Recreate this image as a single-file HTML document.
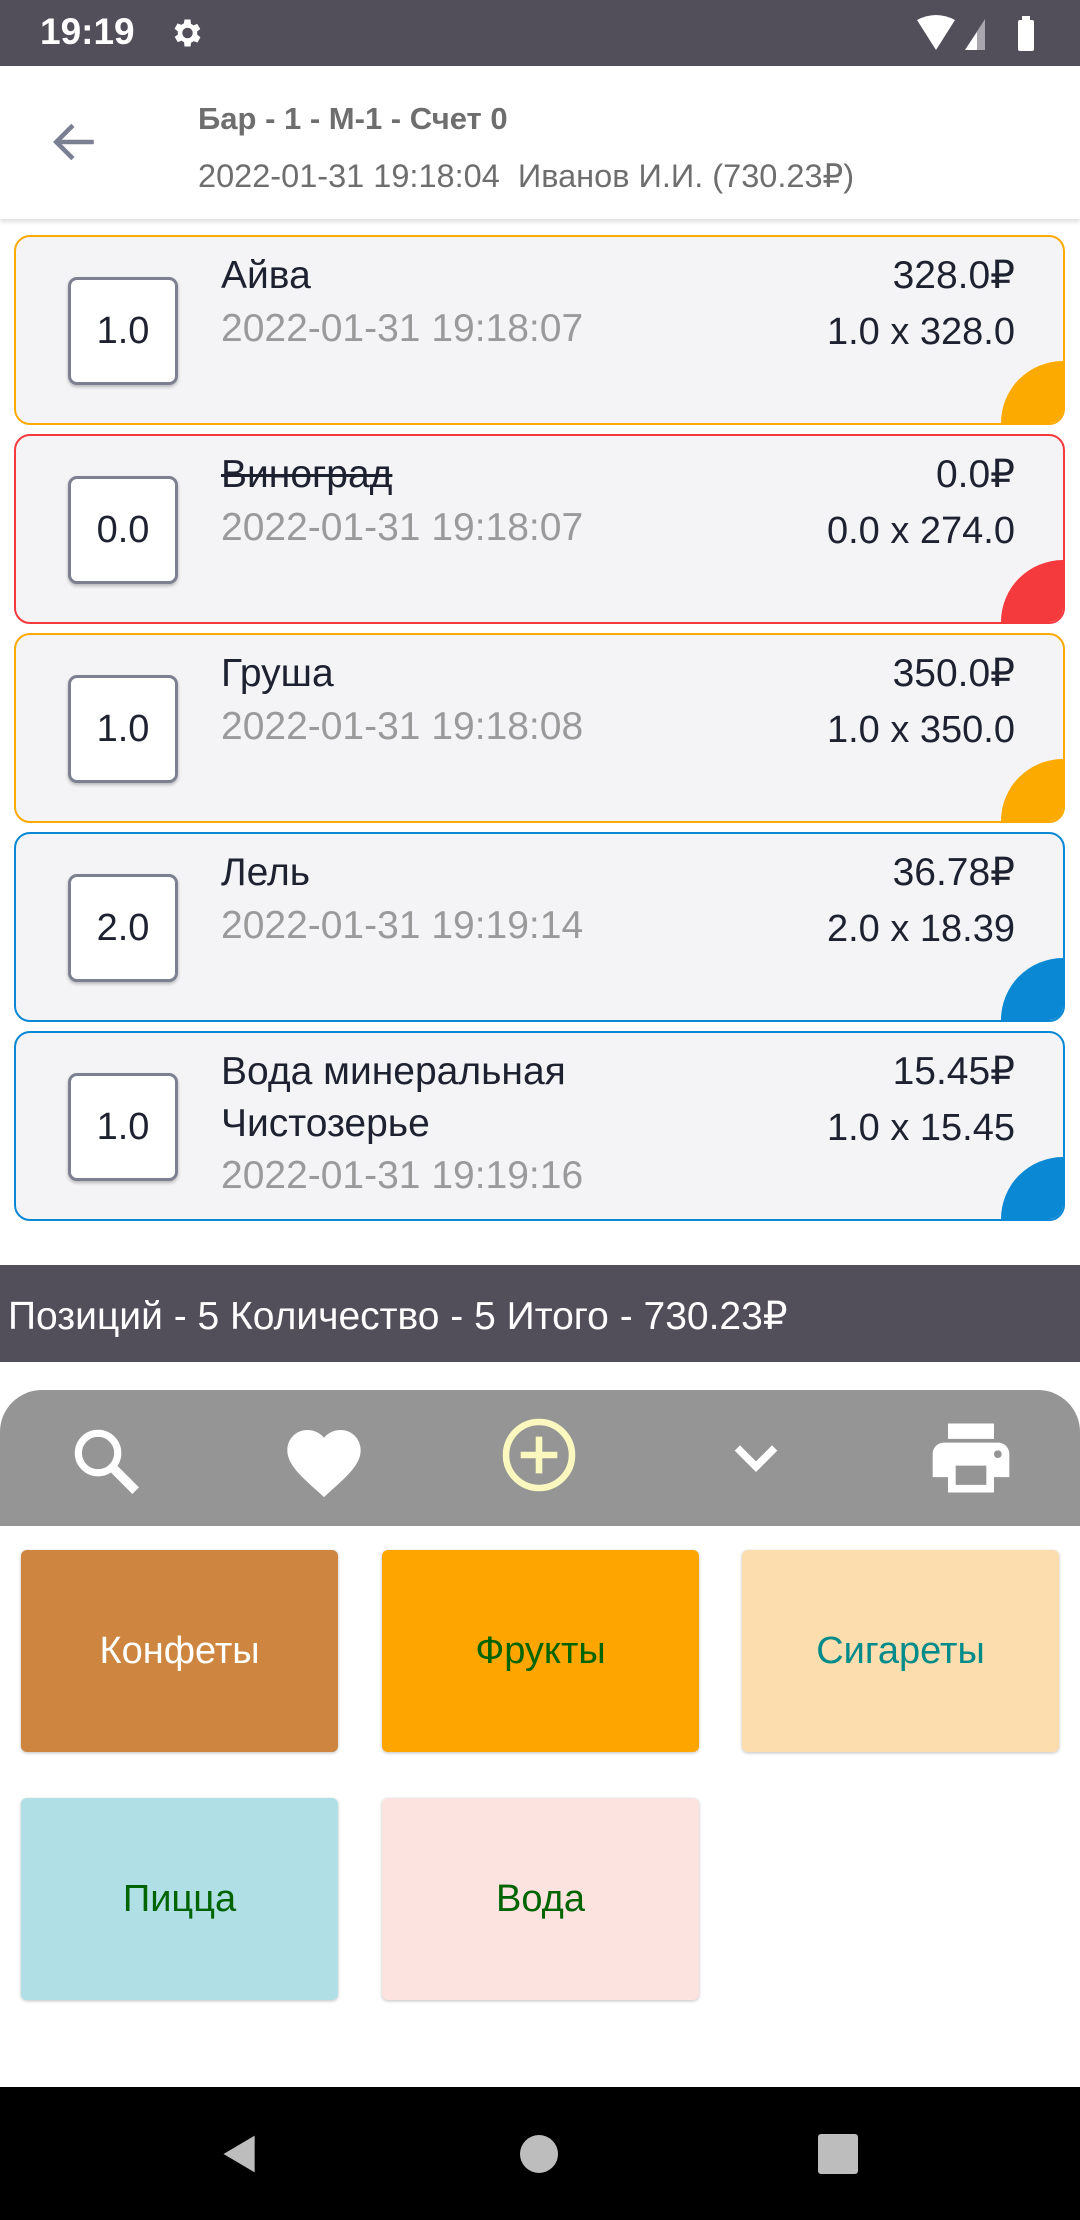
<!DOCTYPE html>
<html><head><meta charset="utf-8"><style>
*{margin:0;padding:0;box-sizing:border-box}
body{width:1080px;height:2220px;position:relative;background:#fff;font-family:"Liberation Sans",sans-serif;overflow:hidden}
.abs{position:absolute}
.card{position:absolute;left:14px;width:1051px;border:2px solid;border-radius:16px;background:#f4f4f6;overflow:hidden}
.qty{position:absolute;left:52px;top:40px;width:110px;height:108px;background:#fff;border:3px solid #7c8090;border-radius:9px;font-size:38px;color:#1e2230;display:flex;align-items:center;justify-content:center;box-shadow:0 2px 3px rgba(0,0,0,.25)}
.name{position:absolute;left:205px;top:13px;font-size:39px;color:#1e2230;line-height:52px}
.date{position:absolute;left:205px;font-size:39px;color:#9a9a9a}
.price{position:absolute;right:48px;top:13px;font-size:39px;color:#1e2230;line-height:52px;text-align:right}
.mul{position:absolute;right:48px;top:74px;font-size:38px;color:#1e2230}
.corner{position:absolute;right:0;bottom:0;width:62px;height:62px;border-top-left-radius:62px}
.tile{position:absolute;width:317px;height:202px;border-radius:6px;display:flex;align-items:center;justify-content:center;font-size:38px;box-shadow:0 1px 3px rgba(0,0,0,.25)}
</style></head><body>
<div class="abs" style="left:0;top:0;width:1080px;height:66px;background:#524f5a"></div>
<div class="abs" style="left:40px;top:11px;font-size:37px;font-weight:bold;color:#fff">19:19</div>
<svg class="abs" style="left:168px;top:15px" width="36" height="36" viewBox="0 0 24 24"><path fill="#fff" d="M19.4 13a7.5 7.5 0 000-2l2.1-1.6-2-3.5-2.5 1a7 7 0 00-1.7-1L15 3h-4l-.4 2.6a7 7 0 00-1.7 1l-2.5-1-2 3.5L6.6 11a7.5 7.5 0 000 2l-2.1 1.6 2 3.5 2.5-1a7 7 0 001.7 1L11 21h4l.4-2.6a7 7 0 001.7-1l2.5 1 2-3.5zM13 15.5a3.5 3.5 0 110-7 3.5 3.5 0 010 7z"/></svg>
<svg class="abs" style="left:915px;top:14px" width="130" height="40" viewBox="0 0 130 40"><path fill="#fff" d="M2 6Q21-4 40 6L21 36z"/><path fill="#fff" d="M50 36L70 5v31z" opacity=".5"/><path fill="#fff" d="M50 36L62 18v18z"/><rect x="103" y="6" width="16" height="31" rx="2" fill="#fff"/><rect x="107" y="2" width="8" height="5" fill="#fff"/></svg>
<div class="abs" style="left:0;top:66px;width:1080px;height:153px;background:#fff;box-shadow:0 3px 4px rgba(0,0,0,.12)"></div>
<svg class="abs" style="left:50px;top:117px" width="50" height="50" viewBox="0 0 24 24"><path fill="none" stroke="#7a7f92" stroke-width="2.2" d="M21 12H4M11 4l-8 8 8 8"/></svg>
<div class="abs" style="left:198px;top:101px;font-size:31px;font-weight:bold;color:#6e6e6e">Бар - 1 - М-1 - Счет 0</div>
<div class="abs" style="left:198px;top:157px;font-size:32.5px;color:#6e6e6e">2022-01-31 19:18:04&nbsp; Иванов И.И. (730.23₽)</div>

<div class="card" style="top:235px;height:190px;border-color:#fcaa00"><div class="qty">1.0</div><div class="name">Айва</div><div class="date" style="top:70px">2022-01-31 19:18:07</div><div class="price">328.0₽</div><div class="mul">1.0 x 328.0</div><div class="corner" style="background:#fcaa00"></div></div>
<div class="card" style="top:434px;height:190px;border-color:#f53a3e"><div class="qty">0.0</div><div class="name" style="text-decoration:line-through">Виноград</div><div class="date" style="top:70px">2022-01-31 19:18:07</div><div class="price">0.0₽</div><div class="mul">0.0 x 274.0</div><div class="corner" style="background:#f53a3e"></div></div>
<div class="card" style="top:633px;height:190px;border-color:#fcaa00"><div class="qty">1.0</div><div class="name">Груша</div><div class="date" style="top:70px">2022-01-31 19:18:08</div><div class="price">350.0₽</div><div class="mul">1.0 x 350.0</div><div class="corner" style="background:#fcaa00"></div></div>
<div class="card" style="top:832px;height:190px;border-color:#0a88d4"><div class="qty">2.0</div><div class="name">Лель</div><div class="date" style="top:70px">2022-01-31 19:19:14</div><div class="price">36.78₽</div><div class="mul">2.0 x 18.39</div><div class="corner" style="background:#0a88d4"></div></div>
<div class="card" style="top:1031px;height:190px;border-color:#0a88d4"><div class="qty">1.0</div><div class="name">Вода минеральная<br>Чистозерье</div><div class="date" style="top:121px">2022-01-31 19:19:16</div><div class="price">15.45₽</div><div class="mul">1.0 x 15.45</div><div class="corner" style="background:#0a88d4"></div></div>

<div class="abs" style="left:0;top:1265px;width:1080px;height:97px;background:#524f5a"></div>
<div class="abs" style="left:8px;top:1294px;font-size:39px;color:#fff">Позиций - 5 Количество - 5 Итого - 730.23₽</div>

<div class="abs" style="left:0;top:1390px;width:1080px;height:136px;background:#959595;border-radius:42px 42px 0 0"></div>
<svg class="abs" style="left:64px;top:1419px" width="86" height="86" viewBox="0 0 24 24"><circle cx="9.5" cy="9.5" r="5.5" fill="none" stroke="#fff" stroke-width="2"/><path d="M13.5 13.5l6.5 6.5" stroke="#fff" stroke-width="2.6"/></svg>
<svg class="abs" style="left:280px;top:1419px" width="88" height="88" viewBox="0 0 24 24"><path fill="#fff" d="M12 21.3l-1.4-1.3C5.4 15.4 2 12.3 2 8.5 2 5.4 4.4 3 7.5 3c1.7 0 3.4.8 4.5 2.1C13.1 3.8 14.8 3 16.5 3 19.6 3 22 5.4 22 8.5c0 3.8-3.4 6.9-8.6 11.5z"/></svg>
<svg class="abs" style="left:495px;top:1411px" width="88" height="88" viewBox="0 0 24 24"><circle cx="12" cy="12" r="9" fill="none" stroke="#fbf8bf" stroke-width="1.8"/><path d="M12 7v10M7 12h10" stroke="#fbf8bf" stroke-width="1.8"/></svg>
<svg class="abs" style="left:724px;top:1424px" width="64" height="64" viewBox="0 0 24 24"><path d="M5 9l7 7 7-7" fill="none" stroke="#fff" stroke-width="2.8"/></svg>
<svg class="abs" style="left:925px;top:1412px" width="92" height="92" viewBox="0 0 24 24"><path fill="#fff" d="M19 8H5c-1.7 0-3 1.3-3 3v6h4v4h12v-4h4v-6c0-1.7-1.3-3-3-3zm-3 11H8v-5h8v5zm3-7c-.6 0-1-.4-1-1s.4-1 1-1 1 .4 1 1-.4 1-1 1zm-1-9H6v4h12z"/></svg>

<div class="tile" style="left:21px;top:1550px;background:#cd853f;color:#fff">Конфеты</div>
<div class="tile" style="left:382px;top:1550px;background:#ffa500;color:#006400">Фрукты</div>
<div class="tile" style="left:742px;top:1550px;background:#fcdeae;color:#008b8b">Сигареты</div>
<div class="tile" style="left:21px;top:1798px;background:#b0e0e6;color:#006400">Пицца</div>
<div class="tile" style="left:382px;top:1798px;background:#fde3e0;color:#006400">Вода</div>

<div class="abs" style="left:0;top:2087px;width:1080px;height:133px;background:#000"></div>
<svg class="abs" style="left:218px;top:2132px" width="44" height="44" viewBox="0 0 24 24"><path fill="#bdbdbd" d="M20 2v20L3 12z"/></svg>
<div class="abs" style="left:520px;top:2135px;width:38px;height:38px;border-radius:50%;background:#bdbdbd"></div>
<div class="abs" style="left:818px;top:2134px;width:40px;height:40px;border-radius:3px;background:#bdbdbd"></div>
</body></html>
